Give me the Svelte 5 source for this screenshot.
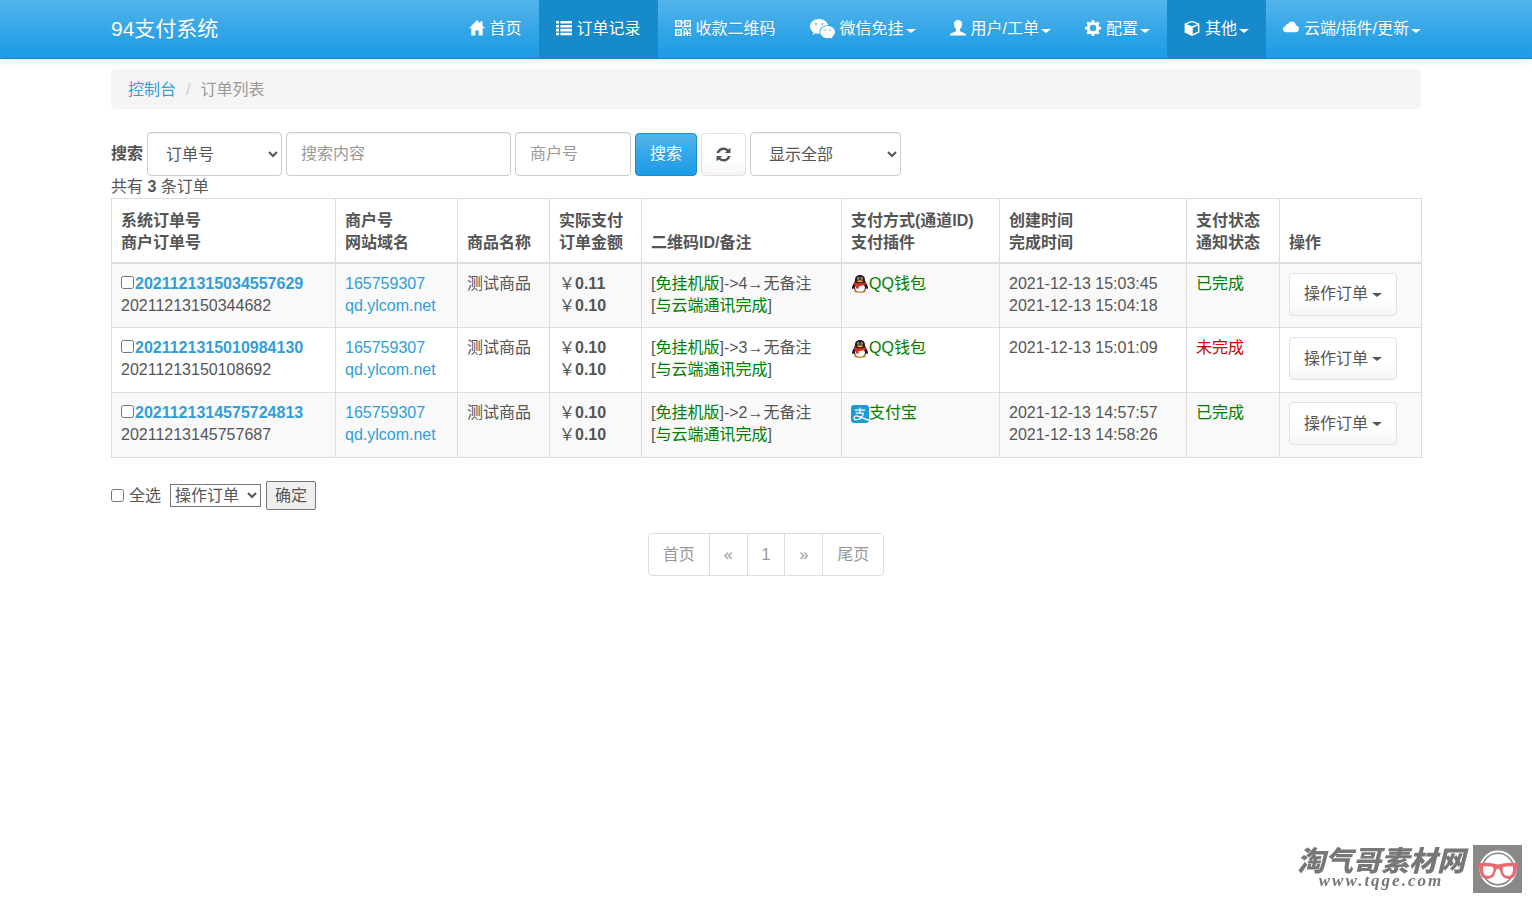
<script lang="ts">
  type Order = {
    sysNo: string;
    outNo: string;
    paid: string;
    amount: string;
    qrId: number;
    pay: "qq" | "alipay";
    created: string;
    finished: string;
    done: boolean;
  };

  const menu = [
    { icon: "home", text: "首页" },
    { icon: "list", text: "订单记录", active: true },
    { icon: "qrcode", text: "收款二维码" },
    { icon: "wechat", text: "微信免挂", caret: true },
    { icon: "user", text: "用户/工单", caret: true },
    { icon: "cog", text: "配置", caret: true },
    { icon: "cube", text: "其他", caret: true, active: true },
    { icon: "cloud", text: "云端/插件/更新", caret: true },
  ];

  const heads = [
    ["系统订单号", "商户订单号"],
    ["商户号", "网站域名"],
    ["商品名称"],
    ["实际支付", "订单金额"],
    ["二维码ID/备注"],
    ["支付方式(通道ID)", "支付插件"],
    ["创建时间", "完成时间"],
    ["支付状态", "通知状态"],
    ["操作"],
  ];

  const orders: Order[] = [
    {
      sysNo: "2021121315034557629",
      outNo: "20211213150344682",
      paid: "0.11",
      amount: "0.10",
      qrId: 4,
      pay: "qq",
      created: "2021-12-13 15:03:45",
      finished: "2021-12-13 15:04:18",
      done: true,
    },
    {
      sysNo: "2021121315010984130",
      outNo: "20211213150108692",
      paid: "0.10",
      amount: "0.10",
      qrId: 3,
      pay: "qq",
      created: "2021-12-13 15:01:09",
      finished: "",
      done: false,
    },
    {
      sysNo: "2021121314575724813",
      outNo: "20211213145757687",
      paid: "0.10",
      amount: "0.10",
      qrId: 2,
      pay: "alipay",
      created: "2021-12-13 14:57:57",
      finished: "2021-12-13 14:58:26",
      done: true,
    },
  ];

  const pages = ["首页", "«", "1", "»", "尾页"];

  let checked = $state<string[]>([]);

  function toggleAll(e: Event) {
    checked = (e.target as HTMLInputElement).checked ? orders.map((o) => o.sysNo) : [];
  }
</script>

{#snippet icon(name: string)}
  {#if name === "home"}
    <svg class="icon" viewBox="0 0 16 16"><path d="M8 0 L0 8.3 H2.3 V15.5 H6.3 V10.5 H9.7 V15.5 H13.7 V8.3 H16 L13.4 5.6 V1.3 H11.4 V3.5 Z" /></svg>
  {:else if name === "list"}
    <svg class="icon" viewBox="0 0 16 16"><path d="M0 1h3v2.6H0zM4.4 1H16v2.6H4.4zM0 4.9h3v2.6H0zM4.4 4.9H16v2.6H4.4zM0 8.8h3v2.6H0zM4.4 8.8H16v2.6H4.4zM0 12.7h3v2.6H0zM4.4 12.7H16v2.6H4.4z" /></svg>
  {:else if name === "qrcode"}
    <svg class="icon" viewBox="0 0 16 16">
      <path fill-rule="evenodd" d="M0 0h7v7H0zM1.5 1.5v4h4v-4zM9 0h7v7H9zM10.5 1.5v4h4v-4zM0 9h7v7H0zM1.5 10.5v4h4v-4z" />
      <path d="M2.7 2.7h1.6v1.6H2.7zM11.7 2.7h1.6v1.6h-1.6zM2.7 11.7h1.6v1.6H2.7zM7.4 1h1v3h-1zM7.4 6h1v3h-1zM9 8.4h3v1.5H9zM13.5 8.4H16v3.2h-1.5v-1.5h-1zM8.5 10.5h1.6v2.2H12v1.6h-2v1.7H8.5zM11.3 10.6h1.8v2h2.9v1.5h-3V16h-1.2v-3.2h-.5zM14.3 14.8H16V16h-1.7z" />
    </svg>
  {:else if name === "wechat"}
    <svg class="icon wide" viewBox="0 0 25 20">
      <path fill-rule="evenodd" d="M9 0C4 0 0 3.3 0 7.4c0 2.400 1.300 4.400 3.400 5.800l-.9 2.700 3.100-1.600c1.100.3 2.200.5 3.400.5h.8c-.2-.6-.3-1.200-.3-1.800 0-3.700 3.500-6.700 7.900-6.700h.8C17.400 2.700 13.600 0 9 0zM6 4a.9.9 0 1 1 0 1.800.9.9 0 0 1 0-1.800zm6.300 0a.9.9 0 1 1 0 1.800.9.9 0 0 1 0-1.800z" />
      <path fill-rule="evenodd" d="M25 13c0-3.400-3.400-6.100-7.400-6.100s-7.300 2.700-7.300 6.100 3.300 6.200 7.300 6.200c.9 0 1.800-.2 2.600-.4l2.400 1.200-.7-2C23.900 16.900 25 15 25 13zm-9.800-2.500a.7.7 0 1 1 0 1.400.7.7 0 0 1 0-1.400zm4.900 0a.7.7 0 1 1 0 1.400.7.7 0 0 1 0-1.400z" />
    </svg>
  {:else if name === "user"}
    <svg class="icon" viewBox="0 0 16 16"><path d="M8 0C5.400 0 3.900 1.700 3.900 4.100c0 2 1 4 2.100 5.100v1.700c-.4.800-5.200 2-5.800 3.300-.2.500-.2.900-.2 1.400h16c0-.5 0-.9-.2-1.400-.6-1.300-5.400-2.500-5.800-3.300V9.200c1.100-1.100 2.100-3.100 2.100-5.100C12.100 1.700 10.600 0 8 0z" /></svg>
  {:else if name === "cog"}
    <svg class="icon" viewBox="0 0 16 16">
      <path fill-rule="evenodd" d="M6.800 0h2.400l.5 2.200 1.300.5 1.900-1.200 1.700 1.700-1.200 1.900.5 1.300 2.100.5v2.300l-2.100.5-.5 1.300 1.200 1.900-1.700 1.700-1.900-1.200-1.300.5-.5 2.100H6.800l-.5-2.100-1.300-.5-1.900 1.200-1.700-1.700L2.600 11l-.5-1.300L0 9.200V6.900l2.100-.5.5-1.300-1.200-1.900 1.700-1.700L5 2.700l1.300-.5zM8 4.800a3.200 3.200 0 1 0 0 6.400 3.200 3.200 0 0 0 0-6.400z" />
    </svg>
  {:else if name === "cube"}
    <svg class="icon" viewBox="0 0 16 16"><path fill-rule="evenodd" d="M8 .8 15.400 3.500v9L8 16 .6 12.500v-9zM8 2.200 2.500 4.200 8 6.300l5.500-2.100zM8.700 7.700v6.400l5.300-2.600V5.600z" /></svg>
  {:else if name === "cloud"}
    <svg class="icon" viewBox="0 0 17 16"><path d="M3.600 12.500C1.500 12.500 0 11 0 9.200 0 7.500 1.300 6.300 2.700 6.100 2.600 4.600 4 3.500 5.300 3.900 6 2.300 7.500 1.200 9.300 1.200c2.500 0 4.400 1.900 4.500 4.200 1.800.2 3.200 1.600 3.200 3.500 0 2-1.600 3.600-3.600 3.600z" /></svg>
  {:else if name === "refresh"}
    <svg class="icon small" viewBox="0 0 14 14">
      <path d="M.5 5.700C1.100 2.700 3.800.5 7 .5c1.700 0 3.300.7 4.500 1.800L13.500.6v5.100H8.200l1.800-1.800C9.200 3.100 8.100 2.700 7 2.700c-2 0-3.600 1.200-4.200 3zM13.500 8.300c-.6 3-3.300 5.200-6.500 5.200-1.700 0-3.300-.7-4.500-1.800L.5 13.400V8.300h5.300L4 10.100c.8.8 1.900 1.200 3 1.200 2 0 3.600-1.200 4.200-3z" />
    </svg>
  {:else if name === "qq"}
    <svg class="pay" viewBox="0 0 18 18">
      <ellipse cx="9" cy="16.600" rx="6" ry="1.400" fill="#d98a2b" />
      <path fill="#2a1c1a" d="M9 0C5.400 0 3.900 2.400 4 5.300 4 7.300 1 9.900 1 12.600c0 1.500.6 1.900 1.900.6C3.700 15.700 6 17 9 17s5.300-1.300 6.100-3.800c1.300 1.300 1.900.9 1.900-.6 0-2.700-3-5.300-3-7.300C14.100 2.400 12.600 0 9 0z" />
      <ellipse cx="9" cy="12.800" rx="5" ry="4" fill="#fff" />
      <ellipse cx="7.400" cy="3.600" rx="1" ry="1.400" fill="#ddd" />
      <ellipse cx="10.600" cy="3.600" rx="1" ry="1.400" fill="#ddd" />
      <circle cx="7.700" cy="3.800" r=".6" />
      <circle cx="10.300" cy="3.800" r=".6" />
      <ellipse cx="9" cy="6.200" rx="3" ry="1" fill="#f2a51d" />
      <path fill="#dd2c22" d="M3.900 7.200Q9 9.600 14.100 7.200l.9 2.400Q11.500 11.200 7.900 11l-.3 2.700-2.700-.4.300-2.900-2.500-.9z" />
    </svg>
  {:else if name === "alipay"}
    <svg class="pay" viewBox="0 0 18 18">
      <rect width="18" height="18" rx="3" fill="#1c9bd8" />
      <path d="M4 5.200h10M9 2.800v5.400M4.600 8.100h8.200M12.600 8.100c-1.200 4-4.200 6.600-7 6.600-2 0-3-1.200-2.600-2.400.5-1.300 2.500-1.700 4.600-1 3 1 6 2.600 10.400 4" fill="none" stroke="#fff" stroke-width="1.300" />
    </svg>
  {/if}
{/snippet}

<header class="navbar">
  <div class="container bar">
    <a class="brand" href="#home">94支付系统</a>
    <nav>
      {#each menu as m}
        <a href="#{m.icon}" class:active={m.active}>
          {@render icon(m.icon)}
          <span>{m.text}</span>
          {#if m.caret}<b class="caret"></b>{/if}
        </a>
      {/each}
    </nav>
  </div>
</header>

<main class="container">
  <ol class="breadcrumb">
    <li><a href="#console">控制台</a></li>
    <li class="here">订单列表</li>
  </ol>

  <form class="search" onsubmit={(e) => e.preventDefault()}>
    <label for="column">搜索</label>
    <select id="column" class="control column">
      <option>订单号</option>
      <option>商户号</option>
    </select>
    <input class="control keyword" type="text" placeholder="搜索内容" aria-label="搜索内容" />
    <input class="control uid" type="text" placeholder="商户号" aria-label="商户号" />
    <button class="btn primary" type="submit">搜索</button>
    <button class="btn" type="button" aria-label="刷新">{@render icon("refresh")}</button>
    <select class="control filter" aria-label="显示">
      <option>显示全部</option>
    </select>
  </form>
  <div>共有 <b>{orders.length}</b> 条订单</div>

  <table>
    <thead>
      <tr>
        {#each heads as h}
          <th>{h[0]}{#if h[1]}<br />{h[1]}{/if}</th>
        {/each}
      </tr>
    </thead>
    <tbody>
      {#each orders as o}
        <tr>
          <td>
            <input type="checkbox" value={o.sysNo} bind:group={checked} aria-label={o.sysNo} /><a href="#order"><b>{o.sysNo}</b></a><br />{o.outNo}
          </td>
          <td><a href="#user">165759307</a><br /><a href="#site">qd.ylcom.net</a></td>
          <td>测试商品</td>
          <td>￥<b>{o.paid}</b><br />￥<b>{o.amount}</b></td>
          <td>
            [<span class="green">免挂机版</span>]-&gt;{o.qrId}→无备注<br />[<span class="green">与云端通讯完成</span>]
          </td>
          <td class="green">{@render icon(o.pay)}{o.pay === "qq" ? "QQ钱包" : "支付宝"}</td>
          <td>{o.created}<br />{o.finished}</td>
          <td class={o.done ? "green" : "red"}>{o.done ? "已完成" : "未完成"}</td>
          <td><button class="btn" type="button">操作订单<b class="caret"></b></button></td>
        </tr>
      {/each}
    </tbody>
  </table>

  <form class="batch" onsubmit={(e) => e.preventDefault()}>
    <label><input type="checkbox" onchange={toggleAll} />全选</label>
    <select aria-label="操作订单">
      <option>操作订单</option>
    </select>
    <button type="submit">确定</button>
  </form>

  <ul class="pagination">
    {#each pages as p}
      <li><a href="#page">{p}</a></li>
    {/each}
  </ul>
</main>

<div class="watermark">
  <div>
    <strong>淘气哥素材网</strong>
    <em>www.tqge.com</em>
  </div>
  <svg viewBox="0 0 49 48">
    <rect width="49" height="48" fill="#8b8889" />
    <circle cx="25" cy="24" r="17.500" fill="none" stroke="#fff" stroke-width="2" />
    <circle cx="25" cy="24" r="15" fill="#fff" />
    <path d="M4.500 18.500Q14 16.500 25 19.500 36 16.500 45.500 18.500L44.500 22Q43.500 22.500 43 27 42 34 36 34 29 34 27.500 27 26.500 23.500 25 23.500 23.500 23.500 22.500 27 21 34 14 34 8 34 7 27 6.500 22.500 5.500 22z" fill="#e76a72" />
    <path d="M10 21.500Q16 20.500 20.500 22.500 21 31 14.500 31 9.500 31 10 21.500zM40 21.500Q34 20.500 29.500 22.500 29 31 35.500 31 40.500 31 40 21.500z" fill="#fff" />
  </svg>
</div>

<style>
  :global(body) {
    margin: 0;
    background: #fff;
    color: #555;
    font: 16px/22px "Liberation Sans", Arial, "Noto Sans CJK SC", sans-serif;
  }
  a {
    color: #2f9fd8;
    text-decoration: none;
  }
  .container {
    box-sizing: border-box;
    max-width: 1340px;
    margin: 0 auto;
    padding: 0 15px;
  }
  .navbar {
    background: linear-gradient(#54b4eb, #2fa4e7 60%, #1d9ce5);
    border-bottom: 1px solid #178acc;
    box-shadow: 0 1px 10px rgba(0, 0, 0, 0.1);
  }
  .bar {
    display: flex;
    justify-content: space-between;
  }
  .bar a {
    display: flex;
    align-items: center;
    height: 58px;
    color: #fff;
    text-shadow: 0 1px 0 rgba(0, 0, 0, 0.1);
    white-space: nowrap;
  }
  .bar .brand {
    font-size: 21px;
  }
  nav {
    display: flex;
    margin-right: -17px;
  }
  nav a {
    padding: 0 17px;
  }
  nav a.active {
    background: #178acc;
  }
  .icon {
    flex: none;
    width: 16px;
    height: 16px;
    margin-right: 5px;
    fill: currentColor;
  }
  nav .icon {
    margin-bottom: 2px;
  }
  .icon.wide {
    width: 25px;
    height: 20px;
    margin-bottom: 0;
  }
  .icon.small {
    width: 15px;
    height: 15px;
    margin: 0;
    vertical-align: middle;
  }
  .caret {
    display: inline-block;
    margin-left: 2px;
    border: 5px solid transparent;
    border-top: 4px solid;
    border-bottom: 0;
    vertical-align: middle;
  }
  nav .caret {
    margin-top: 3px;
  }
  .breadcrumb {
    display: flex;
    margin: 10px 0 23px;
    padding: 10px 17px 8px;
    list-style: none;
    background: #f5f5f5;
    border-radius: 4px;
  }
  .here {
    color: #999;
  }
  .here::before {
    content: "/";
    padding: 0 10px;
    color: #ccc;
  }
  .search {
    display: flex;
    align-items: center;
    gap: 4px;
  }
  .search label {
    font-weight: bold;
  }
  .control {
    box-sizing: border-box;
    height: 44px;
    padding: 8px 14px;
    font: inherit;
    color: #555;
    background: #fff;
    border: 1px solid #ccc;
    border-radius: 4px;
    box-shadow: inset 0 1px 1px rgba(0, 0, 0, 0.075);
  }
  .control::placeholder {
    color: #999;
  }
  .column {
    width: 135px;
  }
  .keyword {
    width: 225px;
  }
  .uid {
    width: 116px;
  }
  .filter {
    width: 151px;
  }
  .btn {
    box-sizing: border-box;
    height: 43px;
    padding: 0 14px;
    font: inherit;
    color: #555;
    background: linear-gradient(#fff, #fff 60%, #f5f5f5);
    border: 1px solid #e2e2e2;
    border-radius: 4px;
    white-space: nowrap;
    cursor: pointer;
  }
  .btn .caret {
    margin-left: 4px;
  }
  .btn.primary {
    color: #fff;
    background: linear-gradient(#54b4eb, #2fa4e7 60%, #1d9ce5);
    border-color: #178acc;
    text-shadow: 0 1px 0 rgba(0, 0, 0, 0.1);
  }
  table {
    width: 100%;
    table-layout: fixed;
    border-collapse: collapse;
    margin-bottom: 23px;
  }
  th,
  td {
    box-sizing: border-box;
    height: 65px;
    padding: 9px;
    border: 1px solid #ddd;
    text-align: left;
    vertical-align: top;
  }
  th {
    height: 64px;
    padding-bottom: 8px;
    vertical-align: bottom;
    border-bottom-width: 2px;
  }
  th:nth-child(1) {
    width: 224px;
  }
  th:nth-child(2) {
    width: 122px;
  }
  th:nth-child(3),
  th:nth-child(4) {
    width: 92px;
  }
  th:nth-child(5) {
    width: 200px;
  }
  th:nth-child(6) {
    width: 158px;
  }
  th:nth-child(7) {
    width: 187px;
  }
  th:nth-child(8) {
    width: 93px;
  }
  th:nth-child(9) {
    width: 142px;
  }
  tbody tr:nth-child(odd) {
    background: #f9f9f9;
  }
  td .btn {
    display: block;
  }
  .green {
    color: green;
  }
  .red {
    color: #d00000;
  }
  .pay {
    width: 18px;
    height: 18px;
    vertical-align: middle;
  }
  input[type="checkbox"] {
    width: 13px;
    height: 13px;
    margin: 0;
  }
  td input[type="checkbox"] {
    margin-right: 1px;
  }
  .batch {
    display: flex;
    align-items: center;
    gap: 5px;
  }
  .batch label {
    display: flex;
    align-items: center;
    gap: 5px;
    margin-right: 4px;
  }
  .batch select {
    width: 91px;
    height: 23px;
    padding: 0;
    font: inherit;
    color: #555;
    background: #fff;
    border: 1px solid #767676;
    border-radius: 0;
  }
  .batch button {
    height: 29px;
    padding: 0 8px;
    font: inherit;
    color: #555;
    background: #efefef;
    border: 1px solid #767676;
    border-radius: 2px;
  }
  .pagination {
    display: flex;
    width: max-content;
    margin: 23px auto;
    padding: 0;
    list-style: none;
    border: 1px solid #ddd;
    border-radius: 4px;
  }
  .pagination li + li {
    border-left: 1px solid #ddd;
  }
  .pagination a {
    display: block;
    padding: 10px 14px;
    line-height: 21px;
    color: #999;
  }
  .watermark {
    position: fixed;
    right: 10px;
    bottom: 10px;
    display: flex;
    gap: 8px;
    color: #777;
  }
  .watermark div {
    display: flex;
    flex-direction: column;
    align-items: center;
  }
  .watermark strong {
    font: italic 900 28px/28px "Noto Sans CJK SC", sans-serif;
  }
  .watermark em {
    font: italic bold 17px/16px "Liberation Serif", serif;
    letter-spacing: 2px;
  }
  .watermark svg {
    width: 49px;
    height: 48px;
  }
</style>
